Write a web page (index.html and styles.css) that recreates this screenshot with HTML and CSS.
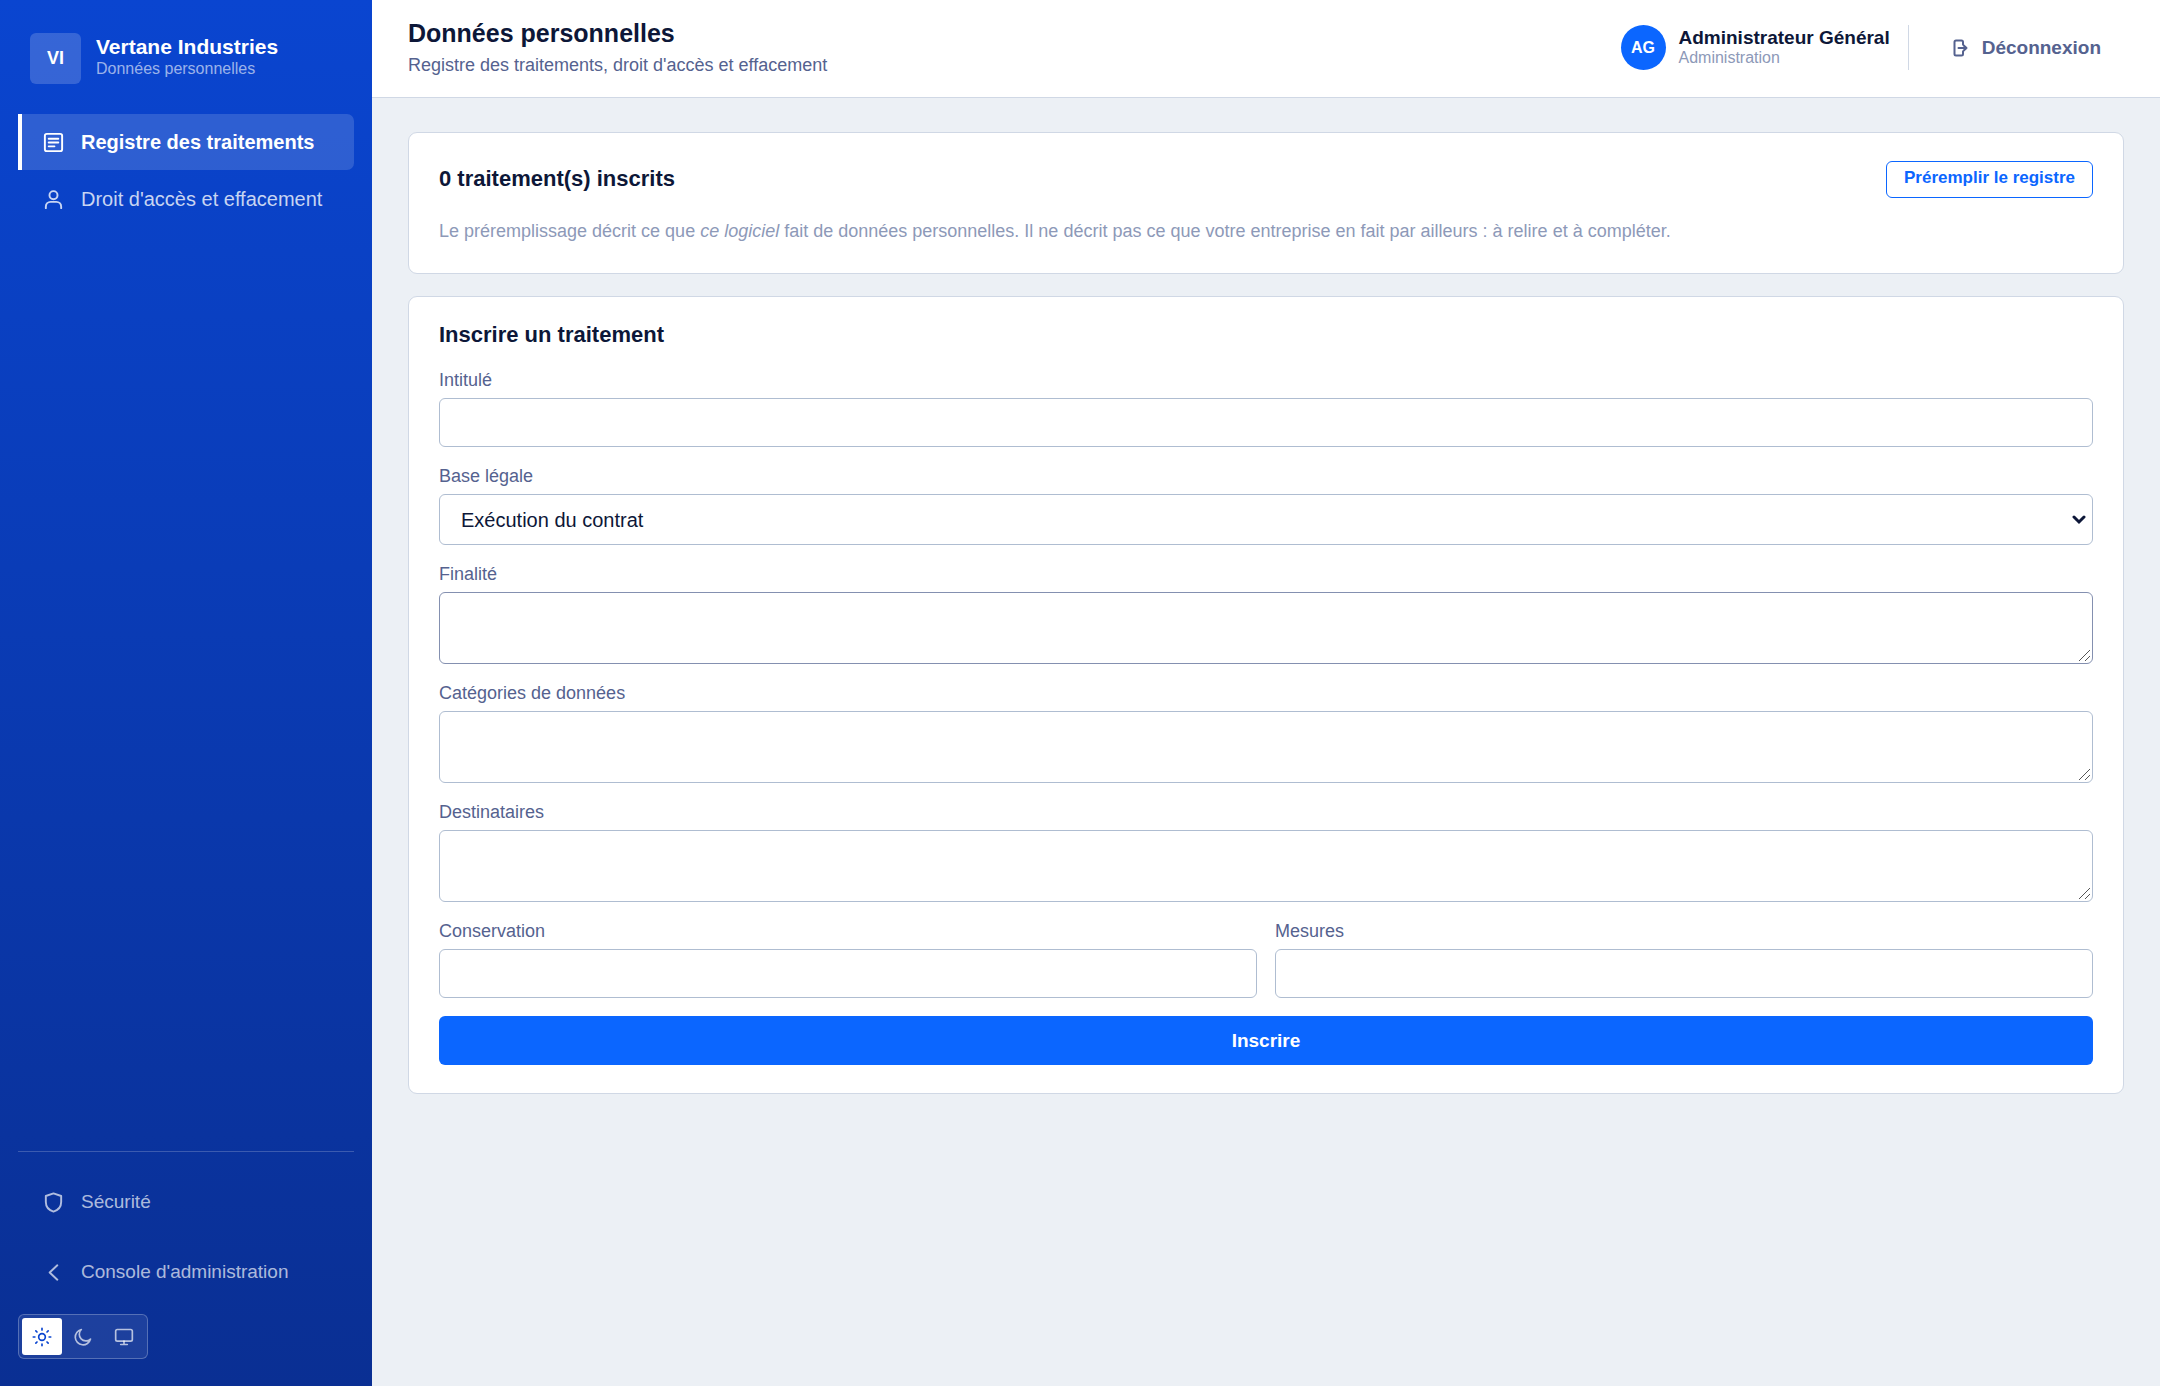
FILE: index.html
```
<!DOCTYPE html>
<html lang="fr">
<head>
    <meta charset="UTF-8">
    <meta name="viewport" content="width=device-width, initial-scale=1.0">
    <title>Données personnelles</title>
    <link rel="stylesheet" href="styles.css">
</head>
<body>
    <aside class="sidebar">
        <div class="brand">
            <div class="brand-logo">VI</div>
            <div class="brand-text">
                <div class="brand-name">Vertane Industries</div>
                <div class="brand-sub">Données personnelles</div>
            </div>
        </div>
        <nav class="nav">
            <a class="nav-link active" href="#registre">
                <svg class="icon" viewBox="0 0 24 24"><rect x="3" y="3" width="18" height="18" rx="2"/><path d="M7 8h10M7 12h10M7 16h6"/></svg>
                Registre des traitements
            </a>
            <a class="nav-link" href="#droits">
                <svg class="icon" viewBox="0 0 24 24"><circle cx="12" cy="7.5" r="4.2"/><path d="M4 21v-1.5a5 5 0 0 1 5-5h6a5 5 0 0 1 5 5V21"/></svg>
                Droit d'accès et effacement
            </a>
        </nav>
        <div class="sidebar-footer">
            <a class="nav-link small" href="#securite">
                <svg class="icon" viewBox="0 0 24 24"><path d="M12 2.5l8 2.7v6.3c0 5-3.3 8.6-8 10-4.7-1.4-8-5-8-10V5.200z"/></svg>
                Sécurité
            </a>
            <a class="nav-link small" href="#console">
                <svg class="icon" viewBox="0 0 24 24"><path d="M16 4.500L8 12l8 7.500"/></svg>
                Console d'administration
            </a>
            <div class="theme">
                <button type="button" class="theme-btn active" aria-label="Thème clair">
                    <svg class="icon" viewBox="0 0 24 24"><circle cx="12" cy="12" r="4"/><path d="M12 1.500v2M12 20.500v2M1.500 12h2M20.500 12h2M4.600 4.600l1.400 1.400M18 18l1.400 1.400M4.600 19.400L6 18M18 6l1.400-1.400"/></svg>
                </button>
                <button type="button" class="theme-btn" aria-label="Thème sombre">
                    <svg class="icon" viewBox="0 0 24 24"><path d="M21 14.500A9.300 9.300 0 1 1 10 3a7.600 7.600 0 0 0 11 11.500z"/></svg>
                </button>
                <button type="button" class="theme-btn" aria-label="Thème du système">
                    <svg class="icon" viewBox="0 0 24 24"><rect x="2" y="3" width="20" height="14" rx="2"/><path d="M8 21h8M12 17v4"/></svg>
                </button>
            </div>
        </div>
    </aside>

    <div class="main">
        <header class="topbar">
            <div>
                <h1>Données personnelles</h1>
                <p class="subtitle">Registre des traitements, droit d'accès et effacement</p>
            </div>
            <div class="user">
                <div class="avatar">AG</div>
                <div>
                    <div class="user-name">Administrateur Général</div>
                    <div class="user-role">Administration</div>
                </div>
                <div class="separator"></div>
                <a class="logout" href="#deconnexion">
                    <svg class="icon" viewBox="0 0 20 20"><path d="M13 6.500V4a1.500 1.500 0 0 0-1.500-1.500H6A1.500 1.500 0 0 0 4.500 4v12A1.500 1.500 0 0 0 6 17.500h5.500A1.500 1.500 0 0 0 13 16v-2.500M8.500 10h8M13.500 7.200l3 2.800-3 2.800"/></svg>
                    Déconnexion
                </a>
            </div>
        </header>

        <main class="content">
            <section class="card">
                <div class="card-head">
                    <h2>0 traitement(s) inscrits</h2>
                    <button type="button" class="btn-outline">Préremplir le registre</button>
                </div>
                <p class="note">Le préremplissage décrit ce que <em>ce logiciel</em> fait de données personnelles. Il ne décrit pas ce que votre entreprise en fait par ailleurs : à relire et à compléter.</p>
            </section>

            <section class="card">
                <h2>Inscrire un traitement</h2>
                <form class="form">
                    <div class="field">
                        <label for="intitule">Intitulé</label>
                        <input type="text" id="intitule">
                    </div>
                    <div class="field">
                        <label for="base">Base légale</label>
                        <select id="base">
                            <option>Exécution du contrat</option>
                        </select>
                    </div>
                    <div class="field">
                        <label for="finalite">Finalité</label>
                        <textarea id="finalite" class="highlight"></textarea>
                    </div>
                    <div class="field">
                        <label for="categories">Catégories de données</label>
                        <textarea id="categories"></textarea>
                    </div>
                    <div class="field">
                        <label for="destinataires">Destinataires</label>
                        <textarea id="destinataires"></textarea>
                    </div>
                    <div class="row">
                        <div class="field">
                            <label for="conservation">Conservation</label>
                            <input type="text" id="conservation">
                        </div>
                        <div class="field">
                            <label for="mesures">Mesures</label>
                            <input type="text" id="mesures">
                        </div>
                    </div>
                    <button type="button" class="btn-primary">Inscrire</button>
                </form>
            </section>
        </main>
    </div>
</body>
</html>
```
FILE: styles.css
```
* {
    box-sizing: border-box;
}

body {
    margin: 0;
    min-height: 100vh;
    display: flex;
    font-family: "Liberation Sans", Arial, sans-serif;
    font-size: 18px;
    color: #0d1738;
    background: #ecf0f5;
}

h1, h2, p {
    margin: 0;
}

a {
    text-decoration: none;
}

.icon {
    width: 24px;
    height: 24px;
    flex: none;
    fill: none;
    stroke: currentColor;
    stroke-width: 2;
    stroke-linecap: round;
    stroke-linejoin: round;
}

/* Sidebar */
.sidebar {
    width: 372px;
    flex: none;
    display: flex;
    flex-direction: column;
    padding: 33px 18px 27px;
    background: linear-gradient(180deg, #0a45d0, #0a2f93);
    color: #fff;
}

.brand {
    display: flex;
    align-items: center;
    gap: 15px;
    padding: 0 12px;
    margin-bottom: 30px;
}

.brand-logo {
    width: 51px;
    height: 51px;
    display: flex;
    align-items: center;
    justify-content: center;
    border-radius: 6px;
    background: rgba(255, 255, 255, 0.18);
    font-size: 18px;
    font-weight: bold;
}

.brand-text {
    padding-bottom: 3px;
}

.brand-name {
    font-size: 21px;
    font-weight: bold;
    line-height: 24px;
}

.brand-sub {
    font-size: 16px;
    line-height: 20px;
    color: rgba(255, 255, 255, 0.6);
}

.nav {
    display: flex;
    flex-direction: column;
    gap: 1px;
}

.nav-link {
    display: flex;
    align-items: center;
    gap: 16px;
    height: 56px;
    padding: 0 20px;
    border-left: 4px solid transparent;
    border-radius: 0 7px 7px 0;
    font-size: 20px;
    color: rgba(255, 255, 255, 0.78);
}

.nav-link .icon {
    width: 23px;
    height: 23px;
}

.nav-link.active {
    border-left-color: #fff;
    background: rgba(255, 255, 255, 0.15);
    color: #fff;
    font-weight: bold;
}

.nav-link.small {
    height: 70px;
    font-size: 19px;
    color: rgba(255, 255, 255, 0.68);
}

.sidebar-footer {
    margin-top: auto;
    padding-top: 15px;
    border-top: 1px solid rgba(255, 255, 255, 0.2);
}

.theme {
    display: inline-flex;
    gap: 1px;
    margin-top: 7px;
    padding: 3px;
    border: 1px solid rgba(255, 255, 255, 0.25);
    border-radius: 6px;
    background: rgba(255, 255, 255, 0.08);
}

.theme-btn {
    width: 40px;
    height: 37px;
    display: flex;
    align-items: center;
    justify-content: center;
    padding: 0;
    border: none;
    border-radius: 3px;
    background: none;
    color: rgba(255, 255, 255, 0.68);
    cursor: pointer;
}

.theme-btn .icon {
    width: 20px;
    height: 20px;
}

.theme-btn.active {
    background: #fff;
    color: #0a45d0;
}

/* Topbar */
.main {
    flex: 1;
    min-width: 0;
}

.topbar {
    display: flex;
    align-items: center;
    justify-content: space-between;
    min-height: 98px;
    padding: 0 36px;
    background: #fff;
    border-bottom: 1px solid #d0d8e5;
}

h1 {
    font-size: 25px;
    line-height: 32px;
}

.subtitle {
    line-height: 32px;
    color: #55628f;
}

.user {
    display: flex;
    align-items: center;
    padding-bottom: 2px;
}

.avatar {
    width: 45px;
    height: 45px;
    margin-right: 13px;
    display: flex;
    align-items: center;
    justify-content: center;
    border-radius: 50%;
    background: #0b66ff;
    color: #fff;
    font-size: 16px;
    font-weight: bold;
}

.user-name {
    font-size: 19px;
    font-weight: bold;
    line-height: 20px;
}

.user-role {
    font-size: 16px;
    line-height: 20px;
    color: #8d99b8;
}

.separator {
    width: 1px;
    height: 45px;
    margin: 0 18px;
    background: #d0d8e5;
}

.logout {
    display: flex;
    align-items: center;
    gap: 12px;
    padding: 12px 23px;
    font-size: 19px;
    font-weight: bold;
    color: #55628f;
}

.logout .icon {
    width: 20px;
    height: 20px;
}

/* Content */
.content {
    display: flex;
    flex-direction: column;
    gap: 22px;
    padding: 34px 36px;
}

.card {
    padding: 28px 30px;
    background: #fff;
    border: 1px solid #d0d8e5;
    border-radius: 9px;
}

.card-head {
    display: flex;
    align-items: center;
    justify-content: space-between;
}

h2 {
    padding-bottom: 2px;
    font-size: 22px;
    line-height: 20px;
}

.btn-outline {
    height: 37px;
    padding: 0 17px 4px;
    border: 1px solid #0b66ff;
    border-radius: 6px;
    background: #fff;
    color: #0b66ff;
    font-family: inherit;
    font-size: 17px;
    font-weight: bold;
    cursor: pointer;
}

.note {
    margin-top: 20px;
    font-size: 18px;
    line-height: 27px;
    color: #8d99b8;
}

.form {
    display: flex;
    flex-direction: column;
    gap: 18px;
    margin-top: 22px;
}

.field {
    display: flex;
    flex-direction: column;
    gap: 6px;
}

.row {
    display: grid;
    grid-template-columns: 1fr 1fr;
    gap: 18px;
}

label {
    line-height: 23px;
    color: #55628f;
}

input,
select,
textarea {
    width: 100%;
    padding: 12px 21px;
    border: 1px solid #afbdd1;
    border-radius: 6px;
    background: #fff;
    color: #0d1738;
    font-family: inherit;
    font-size: 20px;
}

input {
    height: 49px;
}

select {
    height: 51px;
    padding-top: 0;
    padding-bottom: 0;
    appearance: none;
    background: #fff url("data:image/svg+xml,%3Csvg xmlns='http://www.w3.org/2000/svg' width='14' height='10' viewBox='0 0 14 10'%3E%3Cpath d='M2 2l5 5 5-5' fill='none' stroke='%230d1738' stroke-width='3' stroke-linecap='round'/%3E%3C/svg%3E") no-repeat right 6px center;
}

textarea {
    height: 72px;
    resize: vertical;
}

textarea::-webkit-resizer {
    background: url("data:image/svg+xml,%3Csvg xmlns='http://www.w3.org/2000/svg' width='15' height='15' viewBox='0 0 15 15'%3E%3Cpath d='M2 13L13 2M8 13l5-5' fill='none' stroke='%23555555'/%3E%3C/svg%3E") no-repeat right bottom;
}

textarea.highlight {
    border-color: #8490b0;
}

.btn-primary {
    height: 49px;
    border: none;
    border-radius: 6px;
    background: #0b66ff;
    color: #fff;
    font-family: inherit;
    font-size: 19px;
    font-weight: bold;
    cursor: pointer;
}
```
